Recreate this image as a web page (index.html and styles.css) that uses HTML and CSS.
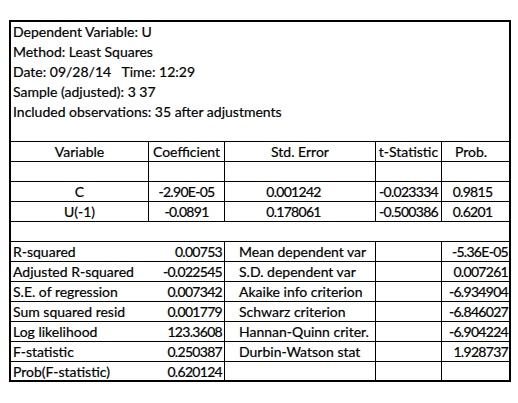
FILE: index.html
```html
<!DOCTYPE html>
<html lang="en">
<head>
    <meta charset="UTF-8">
    <meta name="viewport" content="width=device-width, initial-scale=1.0">
    <title>Least Squares Output</title>
    <link rel="stylesheet" href="styles.css">
</head>
<body>
    <div class="sheet">
        <div class="cell wide">Dependent Variable: U</div>
        <div class="cell wide">Method: Least Squares</div>
        <div class="cell wide">Date: 09/28/14   Time: 12:29</div>
        <div class="cell wide">Sample (adjusted): 3 37</div>
        <div class="cell wide">Included observations: 35 after adjustments</div>
        <div class="cell wide line"></div>

        <div class="cell line sep center">Variable</div>
        <div class="cell line sep center">Coefficient</div>
        <div class="cell line sep center">Std. Error</div>
        <div class="cell line sep center">t-Statistic</div>
        <div class="cell line center prob">Prob.</div>

        <div class="cell line sep"></div>
        <div class="cell line sep"></div>
        <div class="cell line sep"></div>
        <div class="cell line sep"></div>
        <div class="cell line"></div>

        <div class="cell line sep center">C</div>
        <div class="cell line sep center num">-2.90E-05</div>
        <div class="cell line sep center num err">0.001242</div>
        <div class="cell line sep center num">-0.023334</div>
        <div class="cell line center num pval">0.9815</div>

        <div class="cell line sep center">U(-1)</div>
        <div class="cell line sep center num">-0.0891</div>
        <div class="cell line sep center num err">0.178061</div>
        <div class="cell line sep center num">-0.500386</div>
        <div class="cell line center num pval">0.6201</div>

        <div class="cell wide line"></div>

        <div class="cell line">R-squared</div>
        <div class="cell line sep right num">0.00753</div>
        <div class="cell line sep label">Mean dependent var</div>
        <div class="cell line sep"></div>
        <div class="cell line right num last">-5.36E-05</div>

        <div class="cell line">Adjusted R-squared</div>
        <div class="cell line sep right num">-0.022545</div>
        <div class="cell line sep label">S.D. dependent var</div>
        <div class="cell line sep"></div>
        <div class="cell line right num last">0.007261</div>

        <div class="cell line">S.E. of regression</div>
        <div class="cell line sep right num">0.007342</div>
        <div class="cell line sep label">Akaike info criterion</div>
        <div class="cell line sep"></div>
        <div class="cell line right num last">-6.934904</div>

        <div class="cell line">Sum squared resid</div>
        <div class="cell line sep right num">0.001779</div>
        <div class="cell line sep label">Schwarz criterion</div>
        <div class="cell line sep"></div>
        <div class="cell line right num last">-6.846027</div>

        <div class="cell line">Log likelihood</div>
        <div class="cell line sep right num">123.3608</div>
        <div class="cell line sep label">Hannan-Quinn criter.</div>
        <div class="cell line sep"></div>
        <div class="cell line right num last">-6.904224</div>

        <div class="cell line">F-statistic</div>
        <div class="cell line sep right num">0.250387</div>
        <div class="cell line sep label">Durbin-Watson stat</div>
        <div class="cell line sep"></div>
        <div class="cell line right num last">1.928737</div>

        <div class="cell">Prob(F-statistic)</div>
        <div class="cell sep right num">0.620124</div>
        <div class="cell sep"></div>
        <div class="cell sep"></div>
        <div class="cell"></div>
    </div>
</body>
</html>
```

FILE: styles.css
```css
* {
    margin: 0;
    padding: 0;
    box-sizing: border-box;
}

body {
    background-color: white;
    padding: 20px 0 0 9px;
    font-family: Lato, "Open Sans", sans-serif;
    font-size: 14px;
    color: #000;
    -webkit-text-stroke: 0.2px #000;
}

.sheet {
    width: 502px;
    border: 2px solid #000;
    display: grid;
    grid-template-columns: 138px 76px 151px 66px 67px;
    grid-template-rows: repeat(17, 20px) 18px;
}

.cell {
    line-height: 19px;
    padding: 0 2px;
    white-space: pre;
    overflow: visible;
}

.wide {
    grid-column: 1 / -1;
}

.line {
    border-bottom: 1px solid #000;
}

.sep {
    border-right: 1px solid #000;
}

.center {
    text-align: center;
}

.right {
    text-align: right;
}

/* Lato digits run wider than the sheet's font */
.num {
    letter-spacing: -0.7px;
}

.label {
    padding-left: 14px;
}

.err {
    padding-right: 15px;
}

.prob {
    padding-right: 11px;
}

.pval {
    padding-right: 8px;
}

.last {
    padding-right: 1px;
}
```
